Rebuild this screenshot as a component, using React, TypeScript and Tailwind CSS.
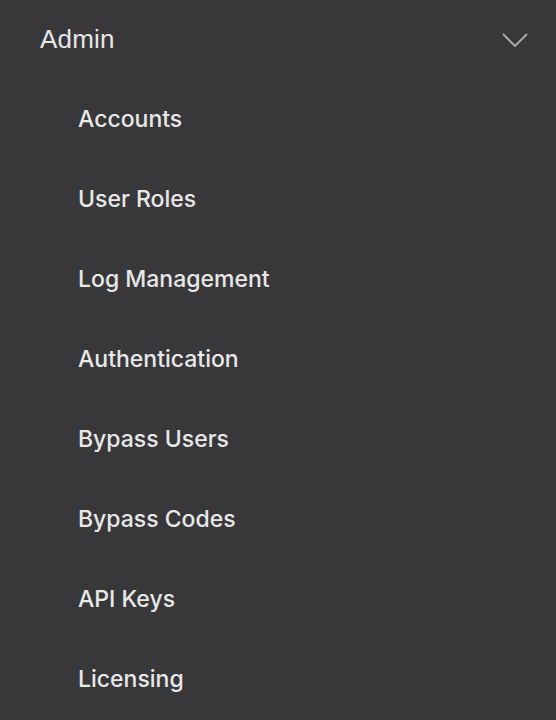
const items = [
  "Accounts",
  "User Roles",
  "Log Management",
  "Authentication",
  "Bypass Users",
  "Bypass Codes",
  "API Keys",
  "Licensing",
];

export default function App() {
  return (
    <div
      className="w-[556px] h-[720px] bg-[#38383a] overflow-hidden"
      style={{ fontFamily: '"Liberation Sans", Arial, sans-serif' }}
    >
      {/* header */}
      <div className="flex items-center justify-between h-[79px] pl-[40px] pr-[28px]">
        <span className="text-[26px] font-light text-[#e6e6e6] tracking-[0.2px]">Admin</span>
        <svg width="26" height="14" viewBox="0 0 26 14" fill="none">
          <path d="M1 1 L13 13 L25 1" stroke="#a9a9ab" strokeWidth="2" />
        </svg>
      </div>

      {/* items */}
      <ul className="font-['Inter',sans-serif]">
        {items.map((item) => (
          <li
            key={item}
            className="flex items-center h-[80px] pl-[78px] text-[23px] font-medium text-[#e8e8e8]"
          >
            {item}
          </li>
        ))}
      </ul>
    </div>
  );
}
